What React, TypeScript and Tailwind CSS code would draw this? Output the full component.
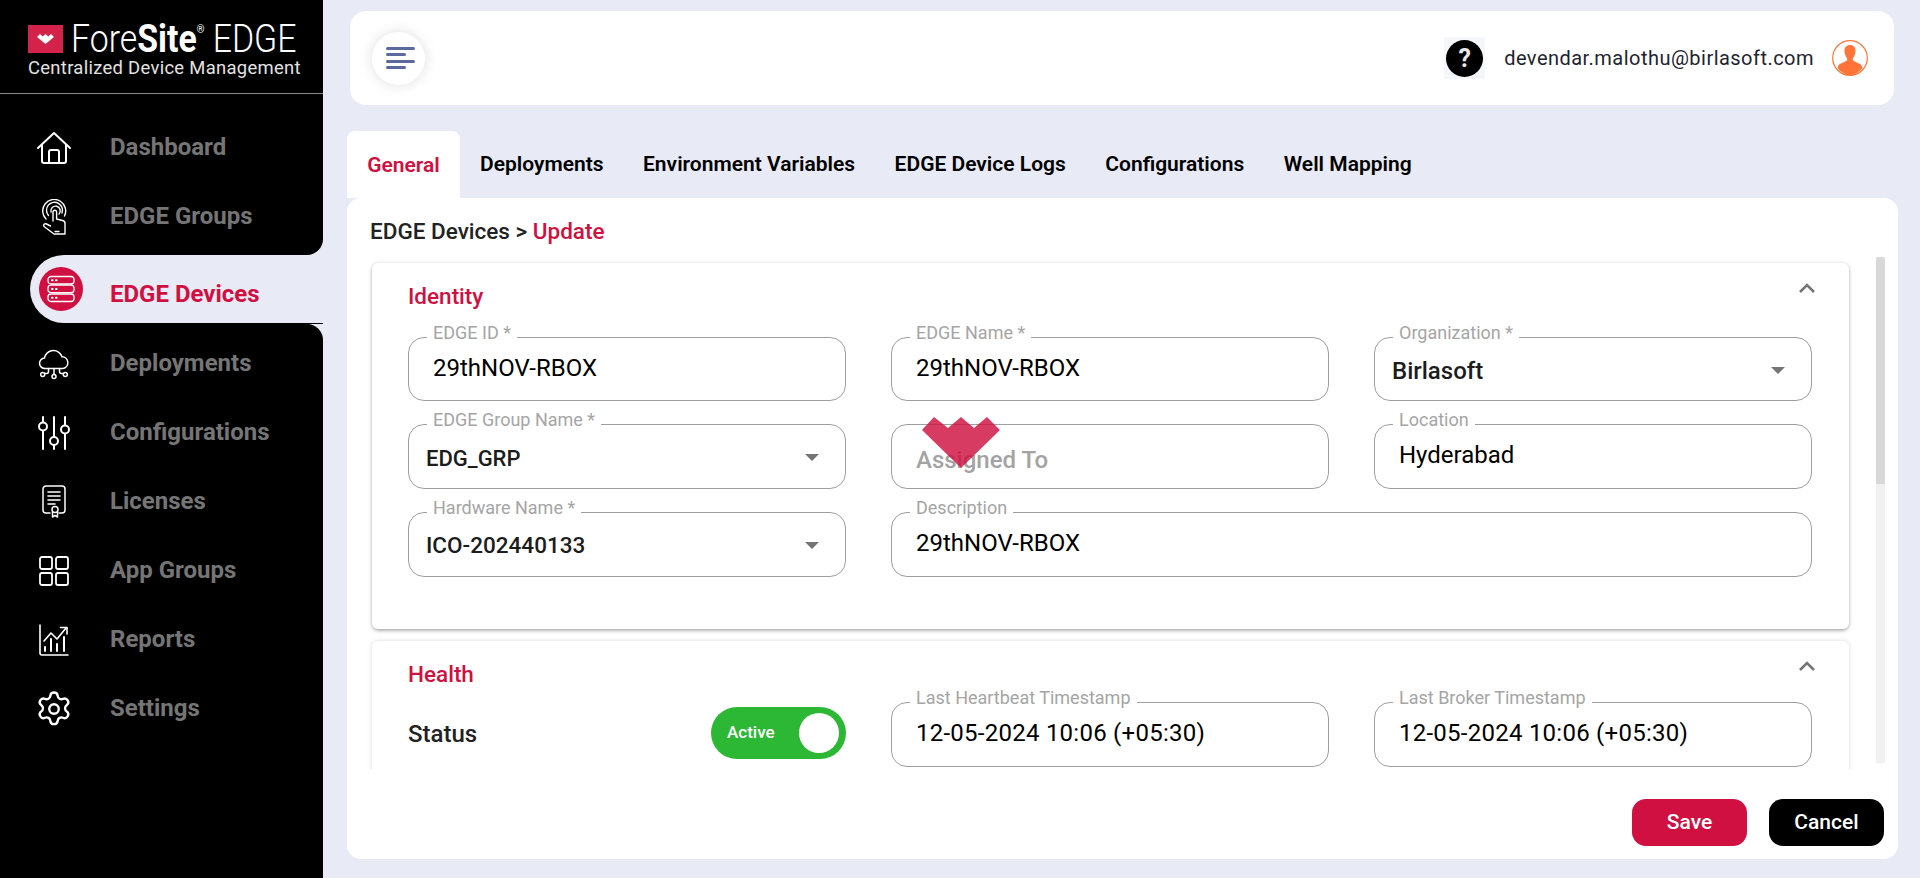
import type { ReactNode } from 'react';

const HomeIcon = () => (
  <svg width="36" height="34" viewBox="0 0 36 34" fill="none" stroke="white" strokeWidth="2" strokeLinecap="round" strokeLinejoin="round">
    <path d="M2 17 18 2l16 15" />
    <path d="M6 14v16a2 2 0 0 0 2 2h20a2 2 0 0 0 2-2V14" />
    <path d="M13 32V21a2 2 0 0 1 2-2h6a2 2 0 0 1 2 2v11" />
  </svg>
);

const TouchIcon = () => (
  <svg width="26" height="36" viewBox="0 0 26 36" fill="none" stroke="white" strokeWidth="1.4" strokeLinecap="round" strokeLinejoin="round">
    <path d="M5 20A11.5 11.5 0 1 1 23.5 17" />
    <path d="M7.5 16.5A8 8 0 1 1 21 14" />
    <path d="M10 13a4.7 4.7 0 1 1 8 2" />
    <path d="M12 22V13a1.8 1.8 0 0 1 3.6 0v7l6 1.5a3 3 0 0 1 2.4 3V35H13L3 27.5c-1.2-1.5.5-3.5 2.5-2.5l4 2" />
    <path d="M14 32.5h4" />
  </svg>
);

const ServerIcon = () => (
  <svg width="28" height="28" viewBox="0 0 28 28" fill="none" stroke="white" strokeWidth="1.3" strokeLinecap="round">
    <rect x="1" y="1.5" width="26" height="7.5" rx="3" />
    <rect x="1" y="10.2" width="26" height="7.5" rx="3" />
    <rect x="1" y="19" width="26" height="7.5" rx="3" />
    <path d="M5 5.2h.6M9 5.2h.6M5 14h.6M9 14h.6M5 22.8h.6M9 22.8h.6" strokeWidth="2" />
  </svg>
);

const CloudIcon = () => (
  <svg width="32" height="32" viewBox="0 0 32 32" fill="none" stroke="white" strokeWidth="1.5" strokeLinecap="round" strokeLinejoin="round">
    <path d="M7 20.5a5.2 5.2 0 0 1-.5-10.4A9 9 0 0 1 24 8.8a5.9 5.9 0 0 1 1 11.7H7Z" />
    <path d="M16 20.5v6M10.5 20.5v3a2 2 0 0 1-2 2H6.5M21.5 20.5v3a2 2 0 0 0 2 2h2" />
    <circle cx="4.7" cy="26.5" r="2" />
    <circle cx="16" cy="28.5" r="2" />
    <circle cx="27.3" cy="26.5" r="2" />
  </svg>
);

const SlidersIcon = () => (
  <svg width="32" height="34" viewBox="0 0 32 34" fill="none" stroke="white" strokeWidth="2" strokeLinecap="round">
    <path d="M5 1v5M5 15v18M16 1v20M16 29v4M27 1v8M27 18v15" />
    <circle cx="5" cy="10.5" r="4" />
    <circle cx="16" cy="25" r="4" />
    <circle cx="27" cy="13.5" r="4" />
  </svg>
);

const LicenseIcon = () => (
  <svg width="24" height="33" viewBox="0 0 24 33" fill="none" stroke="white" strokeWidth="1.5" strokeLinecap="round" strokeLinejoin="round">
    <path d="M8 28H4a3 3 0 0 1-3-3V4a3 3 0 0 1 3-3h16a3 3 0 0 1 3 3v21a3 3 0 0 1-3 3h-3" />
    <path d="M6 7h12M6 11h12M6 15h12M6 19h7" />
    <circle cx="13" cy="24.5" r="3" />
    <path d="M10.5 27v5l2.5-1.5 2.5 1.5v-5" />
  </svg>
);

const AppsIcon = () => (
  <svg width="30" height="30" viewBox="0 0 30 30" fill="none" stroke="white" strokeWidth="1.8">
    <rect x="1" y="1" width="12" height="12" rx="2" />
    <rect x="17" y="1" width="12" height="12" rx="2" />
    <rect x="1" y="17" width="12" height="12" rx="2" />
    <rect x="17" y="17" width="12" height="12" rx="2" />
  </svg>
);

const ReportsIcon = () => (
  <svg width="30" height="32" viewBox="0 0 30 32" fill="none" stroke="white" strokeWidth="1.6" strokeLinecap="round" strokeLinejoin="round">
    <path d="M1 1v28a2 2 0 0 0 2 2h26" />
    <path d="M5 17 12 9l6 6 9-11" />
    <path d="M21.5 3.5H28V10" />
    <path d="M6 27v-4M12 27V15M18 27v-7M25 27V13" strokeWidth="2" />
  </svg>
);

const GearIcon = () => (
  <svg width="38" height="40" viewBox="0 0 24 24" fill="none" stroke="white" strokeWidth="1.5" strokeLinecap="round" strokeLinejoin="round">
    <path d="M9.67 3.7a2.34 2.34 0 0 1 4.66 0 2.34 2.34 0 0 0 3.32 1.91 2.34 2.34 0 0 1 2.33 4.04 2.34 2.34 0 0 0 0 3.84 2.34 2.34 0 0 1-2.33 4.04 2.34 2.34 0 0 0-3.32 1.91 2.34 2.34 0 0 1-4.66 0 2.34 2.34 0 0 0-3.32-1.91 2.34 2.34 0 0 1-2.33-4.04 2.34 2.34 0 0 0 0-3.84 2.34 2.34 0 0 1 2.33-4.04A2.34 2.34 0 0 0 9.67 3.7Z" />
    <circle cx="12" cy="12" r="3" />
  </svg>
);

const Chevron = () => (
  <svg width="16" height="10" viewBox="0 0 16 10" fill="none" stroke="#757575" strokeWidth="2.6" className="mr-[34px] mt-[-1px] shrink-0">
    <path d="M1 9 8 2l7 7" />
  </svg>
);

const Caret = () => (
  <svg width="14" height="7" viewBox="0 0 14 7" fill="#757575" className="absolute right-[26px] top-[29px]">
    <path d="M0 0h14L7 7Z" />
  </svg>
);

function NavItem({ icon, label }: { icon: ReactNode; label: string }) {
  return (
    <div className="flex h-[69px] items-center">
      <div className="flex w-[110px] justify-center pr-[2px]">{icon}</div>
      <span className="pb-[1px] text-[24px] font-bold text-[#757575]">{label}</span>
    </div>
  );
}

interface FieldProps {
  label?: string;
  value: string;
  select?: boolean;
  placeholder?: boolean;
  height?: string;
  textSize?: string;
  tracking?: string;
  className?: string;
}

function Field({ label, value, select, placeholder, height = 'h-[65px]', textSize = 'text-[22.5px]', tracking = '', className = '' }: FieldProps) {
  return (
    <div className={`relative flex items-center rounded-[16px] border border-[#9e9e9e] ${height} ${className}`}>
      {label && (
        <span className="absolute left-[18px] top-[-16px] bg-[linear-gradient(transparent_15px,white_15px)] px-[6px] text-[18px] leading-[22px] text-[#a5a5a5]">{label}</span>
      )}
      {select ? (
        <>
          <span className={`pl-[17px] pt-[3px] font-medium text-[#1c1c1c] ${textSize}`}>{value}</span>
          <Caret />
        </>
      ) : placeholder ? (
        <span className="pl-[24px] pt-[7px] text-[24px] font-medium text-[#a3a3a3]">{value}</span>
      ) : (
        <span className={`pb-[3px] pl-[24px] text-[24px] text-black ${tracking}`}>{value}</span>
      )}
    </div>
  );
}

export default function App() {
  return (
    <div className="flex h-[878px] w-[1920px] overflow-hidden bg-[#e8eaf6] [font-family:Roboto,sans-serif]">
      {/* Sidebar */}
      <aside className="flex h-full w-[323px] shrink-0 flex-col">
        <div className="h-[255px] rounded-br-[16px] bg-black">
          <div className="h-[94px] border-b border-[#8a8a8a] pl-[28px] pt-[25px]">
            <div className="flex h-[28px] items-center">
              <div className="flex h-[28px] w-[35px] shrink-0 items-center justify-center bg-[#d4234b]">
                <svg width="17" height="10" viewBox="0 0 17 10" fill="white">
                  <path d="M0 3 3 0l2.7 2.5L8.5 0l2.8 2.5L14 0l3 3-8.5 7Z" />
                </svg>
              </div>
              <div className="ml-[8px] origin-left scale-x-[0.89] whitespace-nowrap text-[38px] font-light leading-[28px] text-white">
                Fore<span className="font-bold">Site</span>
                <sup className="align-[14px] text-[11px] font-normal">®</sup> EDGE
              </div>
            </div>
            <div className="mt-[6px] origin-left scale-x-[0.97] whitespace-nowrap text-[19px] leading-[18px] tracking-[0.3px] text-[#e2e2e2]">
              Centralized Device Management
            </div>
          </div>
          <div className="pt-[19px]">
            <NavItem icon={<HomeIcon />} label="Dashboard" />
            <NavItem icon={<TouchIcon />} label="EDGE Groups" />
          </div>
        </div>
        <div className="h-[69px] bg-black pl-[30px]">
          <div className="flex h-[68px] items-center rounded-l-[34px] bg-[#e8eaf6] pl-[9px]">
            <div className="flex h-[44px] w-[44px] items-center justify-center rounded-full bg-[#cf1040]">
              <ServerIcon />
            </div>
            <span className="ml-[27px] pt-[9px] text-[24px] font-bold text-[#cf1040]">EDGE Devices</span>
          </div>
        </div>
        <div className="flex-1 rounded-tr-[16px] bg-black pt-[5px]">
          <NavItem icon={<CloudIcon />} label="Deployments" />
          <NavItem icon={<SlidersIcon />} label="Configurations" />
          <NavItem icon={<LicenseIcon />} label="Licenses" />
          <NavItem icon={<AppsIcon />} label="App Groups" />
          <NavItem icon={<ReportsIcon />} label="Reports" />
          <NavItem icon={<GearIcon />} label="Settings" />
        </div>
      </aside>

      {/* Main */}
      <main className="flex h-full min-w-0 flex-1 flex-col pl-[24px] pr-[22px]">
        <header className="ml-[3px] mr-[4px] mt-[11px] flex h-[94px] shrink-0 items-center justify-between rounded-[16px] bg-white pl-[22px] pr-[26px]">
          <div className="flex h-[53px] w-[53px] flex-col items-start justify-center gap-[3.6px] rounded-full bg-white pl-[14px] shadow-[0_0_14px_rgba(0,0,0,0.13)]">
            <span className="h-[3px] w-[29px] rounded-full bg-[#5b6a9b]" />
            <span className="h-[3px] w-[20px] rounded-full bg-[#5b6a9b]" />
            <span className="h-[3px] w-[29px] rounded-full bg-[#5b6a9b]" />
            <span className="h-[3px] w-[20px] rounded-full bg-[#5b6a9b]" />
          </div>
          <div className="flex items-center">
            <div className="flex h-[42px] w-[41px] items-center justify-center bg-[#f5f8fb]">
              <div className="flex h-[37px] w-[37px] items-center justify-center rounded-full bg-black text-[25px] font-bold leading-none text-[#e8e8e8]">?</div>
            </div>
            <span className="ml-[19px] text-[20px] tracking-[0.47px] text-[#1f2330]">devendar.malothu@birlasoft.com</span>
            <svg width="36" height="36" viewBox="0 0 36 36" className="ml-[18px]">
              <circle cx="18" cy="18" r="17.3" fill="white" stroke="#ff7438" strokeWidth="1.2" />
              <path d="M18 5c-4 0-5.8 3-5.5 6.5.2 3 1.3 5 2.4 6.6.6 1 .4 2.4-.6 3-2.4 1.3-6.2 2.2-8 4.5L7 27a15.5 15.5 0 0 0 22 0l.7-1.4c-1.8-2.3-5.6-3.2-8-4.5-1-.6-1.2-2-.6-3 1.1-1.6 2.2-3.6 2.4-6.6C23.8 8 22 5 18 5Z" fill="#ff7438" />
              <path d="M5.5 27.5C9 33 14 35 18 35s9-2 12.5-7.5L28 24l-10 3-10-3Z" fill="#ff7438" />
            </svg>
          </div>
        </header>

        <nav className="ml-0 mt-[26px] flex h-[67px] shrink-0 text-[21px] font-semibold text-black">
          <div className="flex h-full w-[113px] items-center justify-center rounded-t-[8px] bg-white pt-[2px] text-[#cf1040]">General</div>
          <div className="flex items-center gap-[39.5px] pl-[20px] pt-[1px]">
            <span>Deployments</span>
            <span>Environment Variables</span>
            <span>EDGE Device Logs</span>
            <span>Configurations</span>
            <span>Well Mapping</span>
          </div>
        </nav>

        <section className="flex h-[661px] shrink-0 flex-col rounded-[14px] bg-white">
          <div className="shrink-0 pl-[23px] pt-[21px] text-[22.5px] font-medium leading-[24px] text-[#222]">
            EDGE Devices &gt; <span className="text-[#cf1040]">Update</span>
          </div>
          <div className="flex h-[526px] shrink-0 items-start pl-[17px] pt-[14px]">
            <div className="h-[512px] w-[1512px] shrink-0 overflow-hidden pl-[8px] pr-[27px] pt-[6px]">
              <div className="h-[366px] rounded-[6px] bg-white pl-[36px] shadow-[0_2px_4px_-1px_rgba(0,0,0,0.4),0_0_4px_rgba(0,0,0,0.1)]">
                <div className="flex items-start justify-between pt-[21px]">
                  <h3 className="text-[22.5px] font-medium leading-[24px] text-[#cf1040]">Identity</h3>
                  <Chevron />
                </div>
                <div className="mt-[29px] grid w-[1404px] grid-cols-3 gap-x-[45px] gap-y-[23px]">
                  <Field label="EDGE ID *" value="29thNOV-RBOX" height="h-[64px]" />
                  <Field label="EDGE Name *" value="29thNOV-RBOX" height="h-[64px]" />
                  <Field label="Organization *" value="Birlasoft" height="h-[64px]" textSize="text-[24px]" select />
                  <Field label="EDGE Group Name *" value="EDG_GRP" textSize="text-[22px]" select />
                  <Field value="Assigned To" placeholder />
                  <Field label="Location" value="Hyderabad" />
                  <Field label="Hardware Name *" value="ICO-202440133" select />
                  <Field label="Description" value="29thNOV-RBOX" className="col-span-2" />
                </div>
              </div>
              <div className="mt-[12px] h-[200px] rounded-[6px] bg-white pl-[36px] shadow-[0_0_5px_rgba(0,0,0,0.14)]">
                <div className="flex items-start justify-between pt-[21px]">
                  <h3 className="text-[22.5px] font-medium leading-[24px] text-[#cf1040]">Health</h3>
                  <Chevron />
                </div>
                <div className="mt-[16px] grid w-[1404px] grid-cols-3 gap-x-[45px]">
                  <div className="flex h-[65px] items-start justify-between">
                    <span className="pt-[18px] text-[24px] font-medium leading-[28px] text-[#222]">Status</span>
                    <div className="mt-[5px] flex h-[52px] w-[135px] items-center justify-between rounded-full bg-[#2cb834] pl-[16px] pr-[7px]">
                      <span className="text-[17px] font-medium text-white">Active</span>
                      <span className="h-[40px] w-[40px] rounded-full bg-white" />
                    </div>
                  </div>
                  <Field label="Last Heartbeat Timestamp" value="12-05-2024 10:06 (+05:30)" tracking="tracking-[0.25px]" />
                  <Field label="Last Broker Timestamp" value="12-05-2024 10:06 (+05:30)" tracking="tracking-[0.25px]" />
                </div>
              </div>
            </div>
            <div className="h-[506px] w-[9px] shrink-0 bg-[#f1f1f1]">
              <div className="h-[227px] rounded-t-[3px] bg-[#d8d8d8]" />
            </div>
          </div>
          <div className="flex justify-end gap-[22px] pr-[14px] pt-[30px]">
            <button className="h-[47px] w-[115px] rounded-[14px] bg-[#cf1040] text-[21px] font-medium text-white">Save</button>
            <button className="h-[47px] w-[115px] rounded-[14px] bg-black text-[21px] font-medium text-white">Cancel</button>
          </div>
        </section>
      </main>

      {/* Loader mark over the form */}
      <svg width="78" height="51" viewBox="0 0 78 51" className="absolute left-[922px] top-[417px]" fill="#cf1040" fillOpacity="0.82">
        <path d="M0 13 12 0l14 11L39 0l13 11L65 0l13 13-39 38Z" />
      </svg>
    </div>
  );
}
